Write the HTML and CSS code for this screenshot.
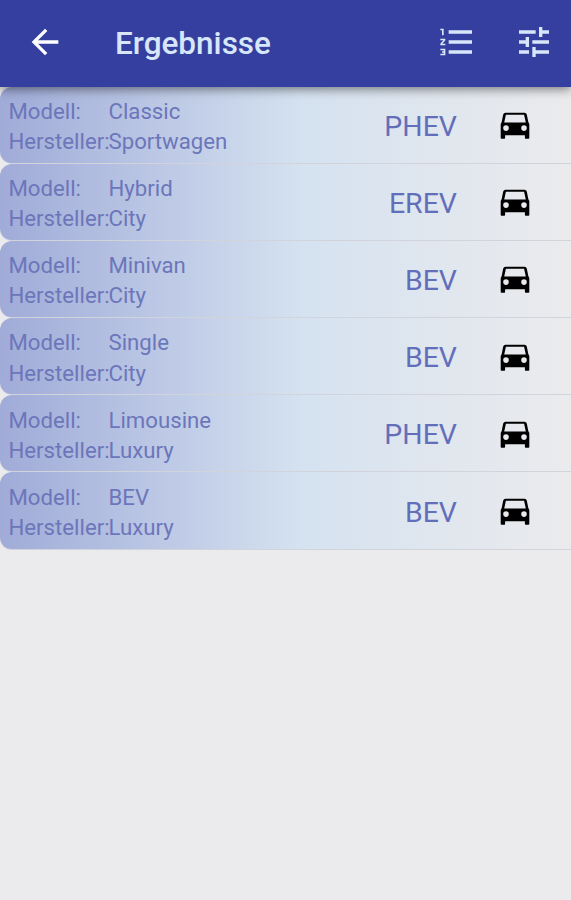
FILE: index.html
```
<!DOCTYPE html>
<html lang="de">
<head>
    <meta charset="UTF-8">
    <meta name="viewport" content="width=device-width, initial-scale=1.0">
    <title>Ergebnisse</title>
    <link rel="stylesheet" href="styles.css">
</head>
<body>
    <!-- Icons -->
    <svg class="sprite">
        <symbol id="car" viewBox="0 0 30 28">
            <path fill-rule="evenodd" d="M5.500 .8h19q1.800 0 2.300 1.800l1.500 7.400 1 2v14q0 .8-.8.8h-2.800q-.8 0-.8-.8v-2.700H5.100v2.700q0 .8-.8.8H1.500q-.8 0-.8-.8V12l1-2 1.500-7.400Q3.700 .8 5.500 .8zM5.900 2.700L4.200 10.600h21.600L24.100 2.700zM6 13.300a2.800 2.800 0 1 0 0 5.600 2.800 2.800 0 0 0 0-5.600zM24 13.300a2.800 2.800 0 1 0 0 5.600 2.800 2.800 0 0 0 0-5.600z"/>
        </symbol>
    </svg>

    <header class="toolbar">
        <svg class="icon back" viewBox="0 0 24 24"><path d="M20 11H7.830l5.590-5.590L12 4l-8 8 8 8 1.410-1.410L7.830 13H20v-2z"/></svg>
        <h1>Ergebnisse</h1>
        <svg class="icon sort" viewBox="0 0 24 24"><path d="M2 17h2v.5H3v1h1v.5H2v1h3v-4H2v1zm1-9h1V4H2v1h1v3zm-1 3h1.800L2 13.100v.9h3v-1H3.200L5 10.900V10H2v1zm5-6v2h14V5H7zm0 14h14v-2H7v2zm0-6h14v-2H7v2z"/></svg>
        <svg class="icon filter" viewBox="0 0 24 24"><path d="M3 17v2h6v-2H3zM3 5v2h10V5H3zm10 16v-2h8v-2h-8v-2h-2v6h2zM7 9v2H3v2h4v2h2V9H7zm14 4v-2H11v2h10zm-6-4h2V7h4V5h-4V3h-2v6z"/></svg>
    </header>

    <main class="list">
        <div class="row">
            <div class="info">
                <span>Modell:</span><span>Classic</span>
                <span>Hersteller:</span><span>Sportwagen</span>
            </div>
            <span class="type">PHEV</span>
            <svg class="car"><use href="#car"/></svg>
        </div>
        <div class="row">
            <div class="info">
                <span>Modell:</span><span>Hybrid</span>
                <span>Hersteller:</span><span>City</span>
            </div>
            <span class="type">EREV</span>
            <svg class="car"><use href="#car"/></svg>
        </div>
        <div class="row">
            <div class="info">
                <span>Modell:</span><span>Minivan</span>
                <span>Hersteller:</span><span>City</span>
            </div>
            <span class="type">BEV</span>
            <svg class="car"><use href="#car"/></svg>
        </div>
        <div class="row">
            <div class="info">
                <span>Modell:</span><span>Single</span>
                <span>Hersteller:</span><span>City</span>
            </div>
            <span class="type">BEV</span>
            <svg class="car"><use href="#car"/></svg>
        </div>
        <div class="row">
            <div class="info">
                <span>Modell:</span><span>Limousine</span>
                <span>Hersteller:</span><span>Luxury</span>
            </div>
            <span class="type">PHEV</span>
            <svg class="car"><use href="#car"/></svg>
        </div>
        <div class="row">
            <div class="info">
                <span>Modell:</span><span>BEV</span>
                <span>Hersteller:</span><span>Luxury</span>
            </div>
            <span class="type">BEV</span>
            <svg class="car"><use href="#car"/></svg>
        </div>
    </main>
</body>
</html>
```
FILE: styles.css
```
* {
    box-sizing: border-box;
}

body {
    margin: 0;
    min-height: 100vh;
    background-color: #ebebed;
    font-family: Roboto, sans-serif;
}

.sprite {
    display: none;
}

/* Kopfleiste */
.toolbar {
    position: relative;
    display: flex;
    align-items: center;
    height: 86.5px;
    padding: 0 17px 2px 25px;
    background-color: #353f9f;
    box-shadow: 0 2px 10px rgba(0, 0, 0, 0.5);
}

.toolbar h1 {
    flex: 1;
    margin: 4px 0 0 50px;
    color: #d8e6fa;
    font-size: 31.5px;
    font-weight: 500;
    line-height: 40px;
}

.icon {
    width: 40px;
    height: 40px;
    fill: #d8e6fa;
}

.back {
    fill: #fff;
}

.sort {
    margin-right: 37px;
}

/* Ergebnisliste */
.row {
    display: flex;
    align-items: center;
    height: 77.2px;
    padding: 3px 41px 0 9px;
    border-bottom: 1.5px solid #d2d4dc;
    background: linear-gradient(to right, #a0abd8 0%, #d5e2f0 53%, #ebebed 100%);
    border-bottom-left-radius: 12px;
    border-top-left-radius: 12px;
}

.info {
    flex: 1;
    display: grid;
    grid-template-columns: 100px 1fr;
    margin-left: -0.5px;
    color: #6c76ba;
    font-size: 22.2px;
    line-height: 30.2px;
}

.type {
    color: #636eba;
    font-size: 28.5px;
}

.car {
    width: 30px;
    height: 28px;
    margin-left: 43px;
}
```
